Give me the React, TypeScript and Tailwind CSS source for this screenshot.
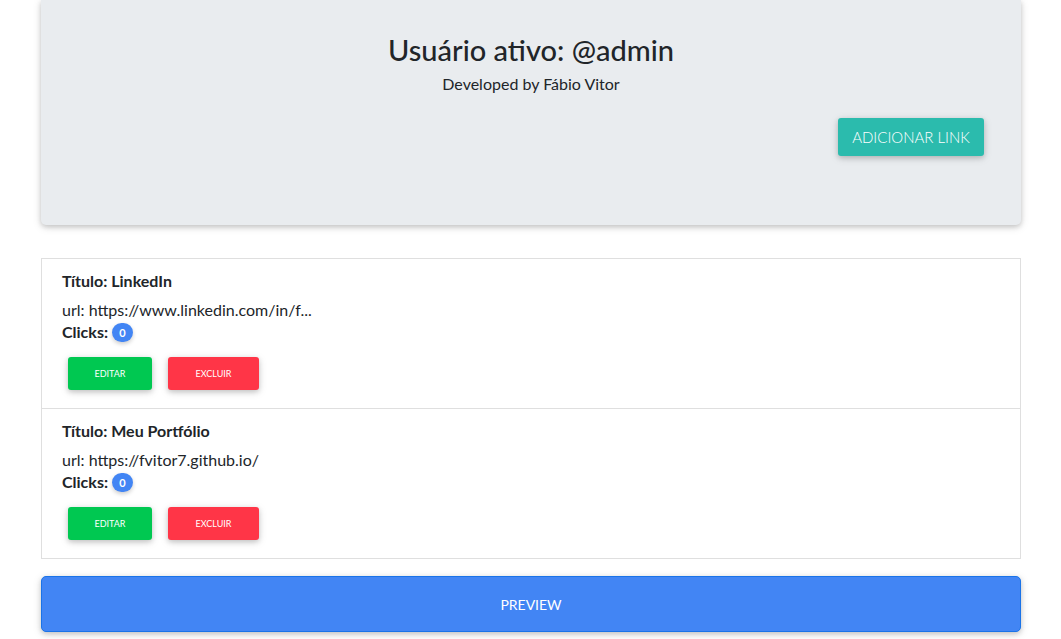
import React from "react";

const links = [
  { title: "LinkedIn", url: "https://www.linkedin.com/in/f...", clicks: 0 },
  { title: "Meu Portfólio", url: "https://fvitor7.github.io/", clicks: 0 },
];

const LinkItem = ({ title, url, clicks }: { title: string; url: string; clicks: number }) => (
  <li className="border border-[#dfdfdf] -mt-px first:mt-0 bg-white px-[20px] pt-[12px] pb-[18px] h-[151px]">
    <h5 className="text-[16px] font-bold text-[#212529] leading-[20px]">Título: {title}</h5>
    <p className="text-[16px] font-normal text-[#212529] leading-[20px] mt-[9px]">url: {url}</p>
    <p className="text-[16px] font-bold text-[#212529] leading-[20px] mt-[2px] flex items-center gap-[4px]">
      Clicks:
      <span className="inline-flex items-center justify-center w-[21px] h-[19px] rounded-full bg-[#4285f4] text-white text-[11px] font-bold shadow-[0_2px_4px_rgba(0,0,0,0.2)] mt-[1px]">
        {clicks}
      </span>
    </p>
    <div className="flex gap-[16px] mt-[15px] pl-[6px]">
      <button className="w-[84px] h-[33px] rounded-[3px] bg-[#00c851] text-white text-[9px] font-normal uppercase shadow-[0_2px_5px_rgba(0,0,0,0.16),0_2px_10px_rgba(0,0,0,0.12)]">
        Editar
      </button>
      <button className="w-[91px] h-[33px] rounded-[3px] bg-[#ff3547] text-white text-[9px] font-normal uppercase shadow-[0_2px_5px_rgba(0,0,0,0.16),0_2px_10px_rgba(0,0,0,0.12)]">
        Excluir
      </button>
    </div>
  </li>
);

export default function App() {
  return (
    <div className="min-h-screen bg-white font-['Lato','Noto_Sans',sans-serif]">
      <div className="w-[980px] ml-[41px]">
        <header className="bg-[#e9ecef] h-[225px] rounded-b-[5px] shadow-[0_2px_5px_rgba(0,0,0,0.16),0_2px_10px_rgba(0,0,0,0.12)] pt-[31px] px-[37px]">
          <h1 className="text-center text-[29px] font-medium text-[#212529] leading-[38px]">Usuário ativo: @admin</h1>
          <p className="text-center text-[16px] font-normal text-[#212529] mt-[5px] leading-[20px]">Developed by Fábio Vitor</p>
          <div className="flex justify-end mt-[24px]">
            <button className="w-[146px] h-[38px] rounded-[3px] bg-[#2bbbad] text-white text-[15px] font-light uppercase shadow-[0_2px_5px_rgba(0,0,0,0.16),0_2px_10px_rgba(0,0,0,0.12)]">
              Adicionar Link
            </button>
          </div>
        </header>
        <ul className="mt-[33px]">
          {links.map((l) => (
            <LinkItem key={l.title} {...l} />
          ))}
        </ul>
        <button className="mt-[17px] w-full h-[56px] rounded-[5px] bg-[#4285f4] border border-[#1a73e8] text-white text-[14px] font-normal uppercase shadow-[0_2px_5px_rgba(0,0,0,0.16),0_2px_10px_rgba(0,0,0,0.12)]">
          Preview
        </button>
      </div>
    </div>
  );
}
